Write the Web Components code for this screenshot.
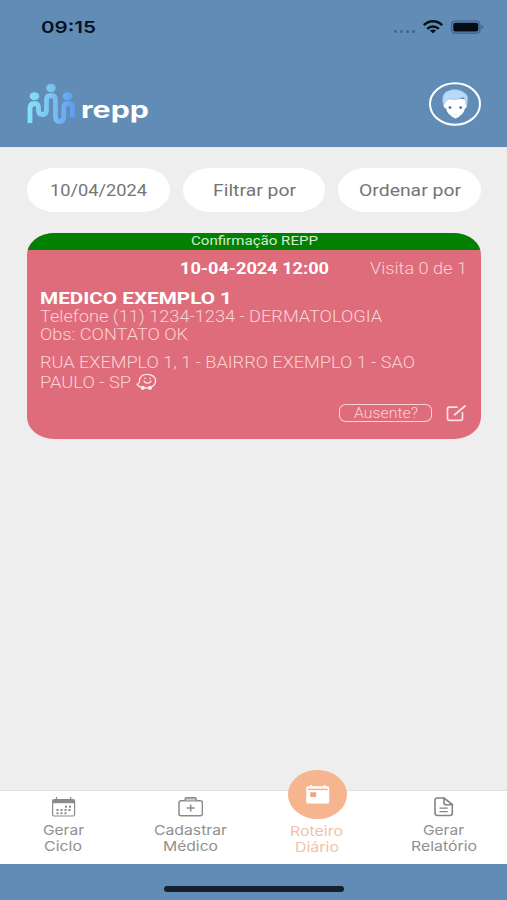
<!DOCTYPE html>
<html lang="pt-BR">
<head>
<meta charset="utf-8">
<title>repp</title>
<style>
  body {
    margin: 0;
    font-family: Roboto, "Liberation Sans", sans-serif;
  }
</style>
</head>
<body>
<repp-app>
  <app-header slot="header"></app-header>
  <filter-bar>
    <filter-pill><fit-text width="97" size="16.5" line="20">10/04/2024</fit-text></filter-pill>
    <filter-pill><fit-text width="83" size="16.5" line="20">Filtrar por</fit-text></filter-pill>
    <filter-pill><fit-text width="102" size="16.5" line="20">Ordenar por</fit-text></filter-pill>
  </filter-bar>
  <visit-card>
    <fit-text slot="status" width="127" size="12.5" line="15.5">Confirmação REPP</fit-text>
    <fit-text slot="date" width="149" size="16" line="20">10-04-2024 12:00</fit-text>
    <fit-text slot="count" width="97" size="16" line="20">Visita 0 de 1</fit-text>
    <fit-text slot="name" width="192" size="17" line="20">MEDICO EXEMPLO 1</fit-text>
    <fit-text slot="info" width="342" size="16" line="18">Telefone (11) 1234-1234 - DERMATOLOGIA</fit-text>
    <fit-text slot="info" width="148" size="16" line="18">Obs: CONTATO OK</fit-text>
    <fit-text slot="address" width="375" size="16" line="20">RUA EXEMPLO 1, 1 - BAIRRO EXEMPLO 1 - SAO</fit-text>
    <fit-text slot="city" width="91" size="16" line="20">PAULO - SP</fit-text>
  </visit-card>
  <nav-bar slot="footer">
    <nav-item icon="calendar">
      <fit-text width="41" size="13.5" line="15.5">Gerar</fit-text>
      <fit-text width="38" size="13.5" line="15.5">Ciclo</fit-text>
    </nav-item>
    <nav-item icon="medkit">
      <fit-text width="73" size="13.5" line="15.5">Cadastrar</fit-text>
      <fit-text width="55" size="13.5" line="15.5">Médico</fit-text>
    </nav-item>
    <nav-item icon="today" active>
      <fit-text width="53" size="13.5" line="15.5">Roteiro</fit-text>
      <fit-text width="44" size="13.5" line="15.5">Diário</fit-text>
    </nav-item>
    <nav-item icon="document">
      <fit-text width="41" size="13.5" line="15.5">Gerar</fit-text>
      <fit-text width="66" size="13.5" line="15.5">Relatório</fit-text>
    </nav-item>
  </nav-bar>
</repp-app>

<script>
class ReppApp extends HTMLElement {
  constructor() {
    super();
    const shadow = this.attachShadow({ mode: "open" });
    shadow.innerHTML = `
      <style>
        :host {
          display: flex;
          flex-direction: column;
          width: 507px;
          height: 900px;
          overflow: hidden;
          background: #eeeeee;
        }
        main {
          flex: 1;
          padding: 20px 26px 0 27px;
          border-top: 1px solid #e6e9f2;
        }
        footer {
          height: 36px;
          background: #618cb6;
          display: flex;
          justify-content: center;
        }
        .home {
          width: 180px;
          height: 5.6px;
          margin-top: 22px;
          border-radius: 3px;
          background: #14202b;
        }
      </style>
      <slot name="header"></slot>
      <main><slot></slot></main>
      <slot name="footer"></slot>
      <footer><div class="home"></div></footer>
    `;
  }
}

class AppHeader extends HTMLElement {
  constructor() {
    super();
    const shadow = this.attachShadow({ mode: "open" });
    shadow.innerHTML = `
      <style>
        :host {
          display: block;
          height: 147px;
          background: #618cb6;
          color: #fff;
        }
        svg { display: block; }
        .status {
          height: 54px;
          box-sizing: border-box;
          padding: 17px 23px 0 41px;
          display: flex;
          justify-content: space-between;
          color: #07121f;
          font-family: Inter, sans-serif;
          font-weight: 600;
        }
        .brand {
          padding: 27px 25px 0 27px;
          display: flex;
          align-items: flex-start;
        }
        .name {
          margin: 15px auto 0 6px;
          font-family: Inter, sans-serif;
          font-weight: 700;
        }
      </style>
      <div class="status">
        <fit-text width="55" size="16.5" line="20">09:15</fit-text>
        <svg width="92" height="22" viewBox="392 17 92 22">
          <g fill="#41648a">
            <circle cx="395.5" cy="31.5" r="1.5"/><circle cx="401.5" cy="31.5" r="1.5"/>
            <circle cx="407.5" cy="31.5" r="1.5"/><circle cx="413.5" cy="31.5" r="1.5"/>
          </g>
          <g fill="none" stroke="#07121f" stroke-width="2.6">
            <path d="M423.8 25.2C429 20 437 20 442.200 25.2"/>
            <path d="M427.200 28.900C430.500 25.800 435.500 25.800 438.800 28.900"/>
          </g>
          <path d="M429.800 30.600Q433 28.400 436.200 30.600L433 33.200Z" fill="#07121f"/>
          <rect x="451.600" y="21" width="28.300" height="12.200" rx="3.500" fill="none" stroke="#3d5e82" stroke-width="1.200"/>
          <rect x="453.300" y="22.700" width="25" height="8.900" rx="1.800" fill="#050b12"/>
          <path d="M481.600 25v4.200q1.600-.6 1.600-2.100t-1.600-2.100z" fill="#3d5e82"/>
        </svg>
      </div>
      <div class="brand">
        <svg width="48" height="44" viewBox="27 81 48 44">
          <defs>
            <linearGradient id="wave" gradientUnits="userSpaceOnUse" x1="27" y1="0" x2="75" y2="0">
              <stop offset="0" stop-color="#86e2f8"/>
              <stop offset=".5" stop-color="#7cc3f3"/>
              <stop offset="1" stop-color="#5d9cf0"/>
            </linearGradient>
          </defs>
          <path d="M30 123V108.500Q30 103.500 34.500 103.500Q38.500 103.500 38.500 108V110.500Q38.500 114.500 42.500 114.500Q46.500 114.500 46.500 110V100Q46.500 95.500 51 95.500Q55.500 95.500 55.500 100V116.500Q55.500 121.500 59.500 121.500Q63.800 121.500 63.800 116.500V108Q63.800 103.500 68 103.500Q72.500 103.500 72.500 108V117" fill="none" stroke="url(#wave)" stroke-width="4.800"/>
          <g fill="url(#wave)">
            <ellipse cx="34.500" cy="96.200" rx="4.800" ry="4"/>
            <ellipse cx="51" cy="88" rx="4.800" ry="4.200"/>
            <ellipse cx="67.600" cy="96.200" rx="4.800" ry="4"/>
          </g>
        </svg>
        <fit-text class="name" width="68" size="23" line="28">repp</fit-text>
        <svg width="54" height="46" viewBox="428 81 54 46">
          <ellipse cx="455" cy="104" rx="25" ry="20.700" fill="none" stroke="#fff" stroke-width="2"/>
          <path d="M445 99Q441.500 107.500 446 108.500Q447.500 115 455.500 118.500Q463.500 115 465 108.500Q468.800 107 466 99Z" fill="#fff"/>
          <path d="M443.500 105.500Q440.500 93.500 448 91Q457 87.500 464 92.500Q470 96 466.500 105.500Q466 99.500 463.500 97.200Q456 101 449 98.800Q445 100.500 443.500 105.500Z" fill="#b9dbfa" stroke="#86b8e6" stroke-width=".7"/>
          <circle cx="450" cy="107.600" r="1.400" fill="#59718b"/>
          <circle cx="460.700" cy="107.600" r="1.400" fill="#59718b"/>
          <path d="M453.500 114.300h4" stroke="#d5e2ee" stroke-width=".8"/>
        </svg>
      </div>
    `;
  }
}

class FilterBar extends HTMLElement {
  constructor() {
    super();
    const shadow = this.attachShadow({ mode: "open" });
    shadow.innerHTML = `
      <style>
        :host {
          display: grid;
          grid-template-columns: repeat(3, 1fr);
          gap: 13px;
          margin-bottom: 21px;
        }
      </style>
      <slot></slot>
    `;
  }
}

class FilterPill extends HTMLElement {
  constructor() {
    super();
    const shadow = this.attachShadow({ mode: "open" });
    shadow.innerHTML = `
      <style>
        :host {
          display: flex;
          align-items: center;
          justify-content: center;
          height: 44px;
          box-sizing: border-box;
          padding: 1px 0 0 1px;
          border-radius: 27px / 22px;
          background: #fff;
          color: #757575;
        }
      </style>
      <slot></slot>
    `;
  }
}

class VisitCard extends HTMLElement {
  constructor() {
    super();
    const shadow = this.attachShadow({ mode: "open" });
    shadow.innerHTML = `
      <style>
        :host {
          display: block;
          height: 206px;
          border-radius: 27px / 22px;
          overflow: hidden;
          background: #de6c7a;
          color: #fbd3d5;
          font-weight: 300;
        }
        svg { display: block; }
        .status {
          height: 17px;
          display: flex;
          justify-content: center;
          background: #028002;
          color: #d3ecd0;
          font-weight: 400;
        }
        .body { padding: 8.5px 14px 0 13px; }
        .top {
          display: grid;
          grid-template-columns: 1fr auto 1fr;
          margin-bottom: 9px;
        }
        .date { grid-column: 2; padding-left: 2px; }
        .date, .name { color: #fff; font-weight: 700; }
        .count { justify-self: end; }
        .address { margin-top: 9.5px; }
        .city { display: flex; gap: 5px; }
        .actions {
          display: flex;
          justify-content: flex-end;
          gap: 14px;
          margin-top: 11px;
        }
        button {
          width: 93px;
          height: 18px;
          padding: 0;
          display: flex;
          justify-content: center;
          border: 1.5px solid #fbd3d5;
          border-radius: 7px / 6px;
          background: none;
          color: inherit;
          font: inherit;
        }
      </style>
      <div class="status"><slot name="status"></slot></div>
      <div class="body">
        <div class="top">
          <div class="date"><slot name="date"></slot></div>
          <div class="count"><slot name="count"></slot></div>
        </div>
        <div class="name"><slot name="name"></slot></div>
        <slot name="info"></slot>
        <div class="address">
          <slot name="address"></slot>
          <div class="city">
            <slot name="city"></slot>
            <svg width="21" height="18" viewBox="0 0 21 18" fill="none" stroke="#fde3e3" stroke-width="1.300">
              <path d="M5.500 14.400C3.500 13.800 1.700 12.600 1 11.300C3 11 3.400 9.800 3.500 7.500C3.800 3.600 7 1.300 11.200 1.300C16 1.300 19.600 4 19.600 7.800C19.600 10.500 18.200 12.600 15.500 14M8.500 15H12.500"/>
              <path d="M7.800 7.600Q8.600 10.200 11.500 10.200T15.200 7.600"/>
              <circle cx="6.800" cy="14.800" r="1.500" fill="#fff"/>
              <circle cx="14" cy="14.800" r="1.500" fill="#fff"/>
              <path d="M9 4.600v1.600M14 4.600v1.600"/>
            </svg>
          </div>
        </div>
        <div class="actions">
          <button><fit-text width="64" size="14" line="16">Ausente?</fit-text></button>
          <svg width="21" height="18" viewBox="0 0 21 18" fill="none" stroke="#fde0e1" stroke-width="1.700">
            <path d="M11.500 3.200H3.500Q1.500 3.200 1.500 5V14.500Q1.500 16.300 3.500 16.300H14.500Q16.500 16.300 16.500 14.500V8"/>
            <path d="M8 11.200L19.600 1.500" stroke-width="1.900"/>
          </svg>
        </div>
      </div>
    `;
  }
}

class NavBar extends HTMLElement {
  constructor() {
    super();
    const shadow = this.attachShadow({ mode: "open" });
    shadow.innerHTML = `
      <style>
        :host {
          display: grid;
          grid-template-columns: repeat(4, 1fr);
          height: 74px;
          box-sizing: border-box;
          border-top: 1px solid #e2e2e2;
          background: #fff;
        }
      </style>
      <slot></slot>
    `;
  }
}

const icons = {
  calendar: `
    <g fill="none" stroke="#8b8b8b" stroke-width="1.200">
      <rect x="1.600" y="2.600" width="22" height="16.400" rx="1.500"/>
      <path d="M5.500 0V4M19.700 0V4"/>
    </g>
    <path d="M2 3H23.200V6.200H2Z" fill="#8b8b8b"/>
    <path d="M14 9.800h7M5.500 13h15.500M5.500 16.200h11.500" fill="none" stroke="#8b8b8b" stroke-width="2" stroke-dasharray="2 2"/>`,
  medkit: `
    <g fill="none" stroke="#8b8b8b" stroke-width="1.500">
      <rect x="1" y="3.700" width="23.400" height="15" rx="2"/>
      <path d="M7.200 3.500V2Q7.200 .8 8.500 .8H16.900Q18.200 .8 18.200 2V3.500" fill="#ccc"/>
      <path d="M12.700 7.500V14.500M8.700 11H16.700"/>
    </g>`,
  today: `
    <path d="M1.300 3Q1.300 1.300 3 1.300H5V0H7V1.300H18.500V0H20.500V1.300H22.500Q24.200 1.300 24.200 3V17Q24.200 18.500 22.500 18.500H3Q1.300 18.500 1.300 17Z" fill="#fff"/>
    <path d="M3 4.400H22.800" stroke="#f6b48f" stroke-width="1.600"/>
    <rect x="5.200" y="7.300" width="6" height="4.600" fill="#f3a184"/>`,
  document: `
    <g fill="none" stroke="#848484" stroke-width="1.600">
      <path d="M13 1H6.500Q4 1 4 3.200V16.300Q4 18.500 6.500 18.500H18.800Q21.300 18.500 21.300 16.300V7.500L13 1V6Q13 7.800 15 7.800H21"/>
      <path d="M8.500 11.200H16.700M8.500 14.600H16.700" stroke-width="1.300"/>
    </g>`
};

class NavItem extends HTMLElement {
  constructor() {
    super();
    const shadow = this.attachShadow({ mode: "open" });
    shadow.innerHTML = `
      <style>
        :host {
          display: flex;
          flex-direction: column;
          align-items: center;
          color: #909090;
          font-family: Inter, sans-serif;
        }
        :host([active]) { color: #f1c3a6; }
        .icon {
          display: flex;
          align-items: center;
          justify-content: center;
          height: 19px;
          margin: 6px 0 7px;
        }
        :host([active]) .icon {
          width: 59px;
          height: 49px;
          margin: -21px 0 5px 1px;
          border-radius: 50%;
          background: #f6b48f;
        }
        svg { display: block; }
      </style>
      <div class="icon">
        <svg width="25" height="20" viewBox="0 0 25 20">${icons[this.getAttribute("icon")]}</svg>
      </div>
      <slot></slot>
    `;
  }
}

// Text set on one line and stretched horizontally to the given width
class FitText extends HTMLElement {
  constructor() {
    super();
    const shadow = this.attachShadow({ mode: "open" });
    shadow.innerHTML = `
      <style>
        :host { display: block; flex: none; text-align: left; }
        span {
          display: inline-block;
          vertical-align: top;
          white-space: nowrap;
          transform-origin: 0 50%;
        }
      </style>
      <span><slot></slot></span>
    `;
  }

  connectedCallback() {
    const span = this.shadowRoot.querySelector("span");
    const width = Number(this.getAttribute("width"));
    const line = this.getAttribute("line");
    this.style.width = width + "px";
    this.style.height = line + "px";
    span.style.fontSize = this.getAttribute("size") + "px";
    span.style.lineHeight = line + "px";
    span.style.transform = "none";
    const natural = span.getBoundingClientRect().width;
    span.style.transform = `scaleX(${width / natural})`;
  }
}

customElements.define("repp-app", ReppApp);
customElements.define("app-header", AppHeader);
customElements.define("filter-bar", FilterBar);
customElements.define("filter-pill", FilterPill);
customElements.define("visit-card", VisitCard);
customElements.define("nav-bar", NavBar);
customElements.define("nav-item", NavItem);
customElements.define("fit-text", FitText);
</script>
</body>
</html>
